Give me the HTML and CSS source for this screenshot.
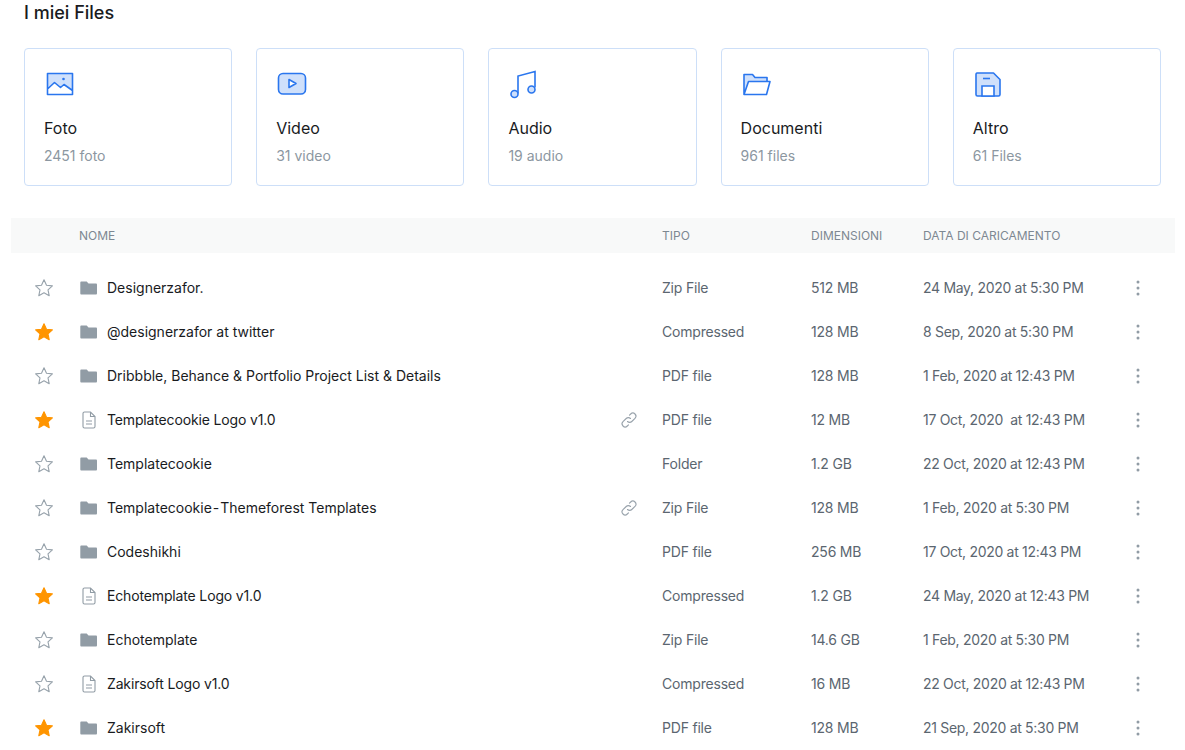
FILE: index.html
```html
<!DOCTYPE html>
<html lang="en">
<head>
    <meta charset="UTF-8">
    <meta name="viewport" content="width=device-width, initial-scale=1.0">
    <title>I miei Files</title>
    <link rel="stylesheet" href="styles.css">
</head>
<body>
    <svg class="defs" width="0" height="0">
        <symbol id="folder" viewBox="0 0 18 16"><path d="M1.5 1.5h5.2l1.8 2h7.3c.8 0 1.2.4 1.2 1.2v8.6c0 .8-.4 1.2-1.2 1.2H1.5c-.8 0-1.2-.4-1.2-1.2V2.7c0-.8.4-1.2 1.2-1.2z" fill="#919ca5"/></symbol>
        <symbol id="doc" viewBox="0 0 14 18"><path d="M2.5 1h6l4.500 4.500V15.500a1.500 1.500 0 0 1-1.500 1.500h-9A1.500 1.500 0 0 1 1 15.500v-13A1.500 1.500 0 0 1 2.500 1zM8.500 1v4.500H13M4 10h6M4 13h6" fill="none" stroke="#919ca5" stroke-width="1.100"/></symbol>
        <symbol id="star" viewBox="0 0 20 20"><path d="M10 1.800l2.500 5.400 5.900.7-4.400 4 1.200 5.800-5.200-2.900-5.200 2.900 1.200-5.800-4.400-4 5.900-.7z" stroke-linejoin="round"/></symbol>
        <symbol id="link" viewBox="0 0 18 18"><path d="M7.500 10.500a3 3 0 0 0 4.300 0l3.200-3.200a3 3 0 0 0-4.300-4.300L9.500 4.200M10.500 7.500a3 3 0 0 0-4.300 0L3 10.700A3 3 0 0 0 7.300 15l1.200-1.200" fill="none" stroke="#99a3ac" stroke-width="1.100" stroke-linecap="round"/></symbol>
        <symbol id="dots" viewBox="0 0 4 16"><circle cx="2" cy="2" r="1.500"/><circle cx="2" cy="8" r="1.500"/><circle cx="2" cy="14" r="1.500"/></symbol>
    </svg>

    <main class="page">
        <h2 class="title">I miei Files</h2>

        <section class="cards">
            <div class="card">
                <svg class="card-icon" viewBox="0 0 32 32"><path d="M3.500 3.500h25v21h-25z" fill="#cfe0fb"/><path d="M3.500 19l7-6.500 6 5 3.500-3 8.500 6v3.500h-25z" fill="#fff"/><path d="M3.500 3.500h25v21h-25zM3.500 19l7-6.500 6 5 3.500-3 8.500 6" fill="none" stroke="#2a76ee" stroke-width="1.600" stroke-linejoin="round"/><circle cx="19.500" cy="9" r="1.300" fill="#2a76ee"/></svg>
                <div class="card-name">Foto</div>
                <div class="card-sub">2451 foto</div>
            </div>
            <div class="card">
                <svg class="card-icon" viewBox="0 0 32 32"><rect x="2.500" y="3.500" width="27" height="20.500" rx="4.500" fill="#cfe0fb" stroke="#2a76ee" stroke-width="1.600"/><path d="M13 9.500l7 4-7 4z" fill="#fff" stroke="#2a76ee" stroke-width="1.600" stroke-linejoin="round"/></svg>
                <div class="card-name">Video</div>
                <div class="card-sub">31 video</div>
            </div>
            <div class="card">
                <svg class="card-icon" viewBox="0 0 32 32"><path d="M10 23.500V6l17-4.500v16" fill="none" stroke="#2a76ee" stroke-width="1.600"/><circle cx="6.500" cy="24" r="3.500" fill="#cfe0fb" stroke="#2a76ee" stroke-width="1.600"/><circle cx="23.500" cy="19.500" r="3.500" fill="#cfe0fb" stroke="#2a76ee" stroke-width="1.600"/></svg>
                <div class="card-name">Audio</div>
                <div class="card-sub">19 audio</div>
            </div>
            <div class="card">
                <svg class="card-icon" viewBox="0 0 32 32"><path d="M3 24V4.500h8.500l2.500 3h13v4H8z" fill="#cfe0fb"/><path d="M3 24.500V4.500h8.500l2.500 3h12v4M3 24.500l4.500-13H29l-3.500 13z" fill="none" stroke="#2a76ee" stroke-width="1.600" stroke-linejoin="round"/></svg>
                <div class="card-name">Documenti</div>
                <div class="card-sub">961 files</div>
            </div>
            <div class="card">
                <svg class="card-icon" viewBox="0 0 32 32"><path d="M4 3h16.500l6.500 6.500v15a1.500 1.500 0 0 1-1.500 1.500h-21A1.500 1.500 0 0 1 3 24.500v-20A1.500 1.500 0 0 1 4 3z" fill="#cfe0fb" stroke="#2a76ee" stroke-width="1.600" stroke-linejoin="round"/><path d="M9 26V16h12v10z" fill="#fff" stroke="#2a76ee" stroke-width="1.600"/><path d="M10 8.500h7" stroke="#2a76ee" stroke-width="1.600"/></svg>
                <div class="card-name">Altro</div>
                <div class="card-sub">61 Files</div>
            </div>
        </section>

        <table class="files">
            <thead>
                <tr>
                    <th class="col-star"></th>
                    <th class="col-name">Nome</th>
                    <th class="col-link"></th>
                    <th class="col-type">Tipo</th>
                    <th class="col-size">Dimensioni</th>
                    <th class="col-date">Data di caricamento</th>
                    <th class="col-more"></th>
                </tr>
            </thead>
            <tbody>
                <tr>
                    <td><svg class="star"><use href="#star"/></svg></td>
                    <td><div class="name"><svg class="folder"><use href="#folder"/></svg>Designerzafor.</div></td>
                    <td></td>
                    <td>Zip File</td><td>512 MB</td><td>24 May, 2020 at 5:30 PM</td>
                    <td><svg class="dots"><use href="#dots"/></svg></td>
                </tr>
                <tr>
                    <td><svg class="star on"><use href="#star"/></svg></td>
                    <td><div class="name"><svg class="folder"><use href="#folder"/></svg>@designerzafor at twitter</div></td>
                    <td></td>
                    <td>Compressed</td><td>128 MB</td><td>8 Sep, 2020 at 5:30 PM</td>
                    <td><svg class="dots"><use href="#dots"/></svg></td>
                </tr>
                <tr>
                    <td><svg class="star"><use href="#star"/></svg></td>
                    <td><div class="name"><svg class="folder"><use href="#folder"/></svg>Dribbble, Behance &amp; Portfolio Project List &amp; Details</div></td>
                    <td></td>
                    <td>PDF file</td><td>128 MB</td><td>1 Feb, 2020 at 12:43 PM</td>
                    <td><svg class="dots"><use href="#dots"/></svg></td>
                </tr>
                <tr>
                    <td><svg class="star on"><use href="#star"/></svg></td>
                    <td><div class="name narrow"><svg class="doc"><use href="#doc"/></svg>Templatecookie Logo v1.0</div></td>
                    <td><svg class="link"><use href="#link"/></svg></td>
                    <td>PDF file</td><td>12 MB</td><td>17 Oct, 2020 &nbsp;at 12:43 PM</td>
                    <td><svg class="dots"><use href="#dots"/></svg></td>
                </tr>
                <tr>
                    <td><svg class="star"><use href="#star"/></svg></td>
                    <td><div class="name"><svg class="folder"><use href="#folder"/></svg>Templatecookie</div></td>
                    <td></td>
                    <td>Folder</td><td>1.2 GB</td><td>22 Oct, 2020 at 12:43 PM</td>
                    <td><svg class="dots"><use href="#dots"/></svg></td>
                </tr>
                <tr>
                    <td><svg class="star"><use href="#star"/></svg></td>
                    <td><div class="name"><svg class="folder"><use href="#folder"/></svg><span>Templatecookie<span class="dash"> - </span>Themeforest Templates</span></div></td>
                    <td><svg class="link"><use href="#link"/></svg></td>
                    <td>Zip File</td><td>128 MB</td><td>1 Feb, 2020 at 5:30 PM</td>
                    <td><svg class="dots"><use href="#dots"/></svg></td>
                </tr>
                <tr>
                    <td><svg class="star"><use href="#star"/></svg></td>
                    <td><div class="name"><svg class="folder"><use href="#folder"/></svg>Codeshikhi</div></td>
                    <td></td>
                    <td>PDF file</td><td>256 MB</td><td>17 Oct, 2020 at 12:43 PM</td>
                    <td><svg class="dots"><use href="#dots"/></svg></td>
                </tr>
                <tr>
                    <td><svg class="star on"><use href="#star"/></svg></td>
                    <td><div class="name narrow"><svg class="doc"><use href="#doc"/></svg>Echotemplate Logo v1.0</div></td>
                    <td></td>
                    <td>Compressed</td><td>1.2 GB</td><td>24 May, 2020 at 12:43 PM</td>
                    <td><svg class="dots"><use href="#dots"/></svg></td>
                </tr>
                <tr>
                    <td><svg class="star"><use href="#star"/></svg></td>
                    <td><div class="name"><svg class="folder"><use href="#folder"/></svg>Echotemplate</div></td>
                    <td></td>
                    <td>Zip File</td><td>14.6 GB</td><td>1 Feb, 2020 at 5:30 PM</td>
                    <td><svg class="dots"><use href="#dots"/></svg></td>
                </tr>
                <tr>
                    <td><svg class="star"><use href="#star"/></svg></td>
                    <td><div class="name narrow"><svg class="doc"><use href="#doc"/></svg>Zakirsoft Logo v1.0</div></td>
                    <td></td>
                    <td>Compressed</td><td>16 MB</td><td>22 Oct, 2020 at 12:43 PM</td>
                    <td><svg class="dots"><use href="#dots"/></svg></td>
                </tr>
                <tr>
                    <td><svg class="star on"><use href="#star"/></svg></td>
                    <td><div class="name"><svg class="folder"><use href="#folder"/></svg>Zakirsoft</div></td>
                    <td></td>
                    <td>PDF file</td><td>128 MB</td><td>21 Sep, 2020 at 5:30 PM</td>
                    <td><svg class="dots"><use href="#dots"/></svg></td>
                </tr>
            </tbody>
        </table>
    </main>
</body>
</html>
```

FILE: styles.css
```css
html, body {
    margin: 0;
    padding: 0;
    height: 750px;
    overflow: hidden;
}
body {
    font-family: Inter, "Liberation Sans", sans-serif;
    background: #fff;
    color: #191b1e;
}
.defs {
    display: block;
    height: 0;
}
.page {
    padding: 0 10px 0 11px;
}
.title {
    margin: 0;
    padding-left: 13px;
    font-size: 18px;
    line-height: 26px;
    font-weight: 500;
}
.cards {
    display: flex;
    gap: 24px;
    margin: 22px 14px 32px 13px;
}
.card {
    flex: 1;
    height: 138px;
    box-sizing: border-box;
    padding: 21px 19px 0;
    border: 1px solid #cddff8;
    border-radius: 4px;
}
.card-icon {
    display: block;
    width: 32px;
    height: 32px;
}
.card-name {
    margin-top: 14px;
    font-size: 16px;
    line-height: 24px;
    font-weight: 400;
}
.card-sub {
    margin-top: 6px;
    font-size: 14px;
    line-height: 20px;
    color: #8c97a1;
}
.files {
    width: 100%;
    table-layout: fixed;
    border-collapse: collapse;
    font-size: 14px;
    color: #5b6670;
}
.files thead tr {
    background: #f8f9f9;
}
.files th {
    height: 35px;
    padding: 0;
    text-align: left;
    font-size: 12px;
    font-weight: 400;
    text-transform: uppercase;
    color: #7d8892;
}
.files tbody::before {
    content: "";
    display: block;
    height: 13px;
}
.files td {
    height: 44px;
    box-sizing: border-box;
    padding: 0 0 2px;
    letter-spacing: -0.2px;
}
.files td:nth-child(6) {
    letter-spacing: -0.3px;
}
.col-star { width: 68px; }
.col-name { width: 530px; }
.col-link { width: 53px; }
.col-type { width: 149px; }
.col-size { width: 112px; }
.col-date { width: 205px; }
.name {
    display: flex;
    align-items: center;
    color: #191b1e;
    letter-spacing: 0;
}
.name.narrow {
    letter-spacing: -0.15px;
}
.dash {
    word-spacing: -3px;
}
.star {
    display: block;
    width: 20px;
    height: 20px;
    margin: 2px 0 0 23px;
    fill: #fff;
    stroke: #97a2ab;
    stroke-width: 1.100;
}
.star.on {
    fill: #ff9500;
    stroke: #ff9500;
}
.folder {
    flex: none;
    width: 18px;
    height: 16px;
    margin: 2px 9px 0 1px;
}
.doc {
    flex: none;
    width: 14px;
    height: 18px;
    margin: 2px 11px 0 3px;
}
.link {
    display: block;
    width: 18px;
    height: 18px;
    margin: 2px 0 0 11px;
}
.dots {
    display: block;
    width: 4px;
    height: 16px;
    margin: 2px 0 0 8px;
    fill: #919ca5;
}
```
